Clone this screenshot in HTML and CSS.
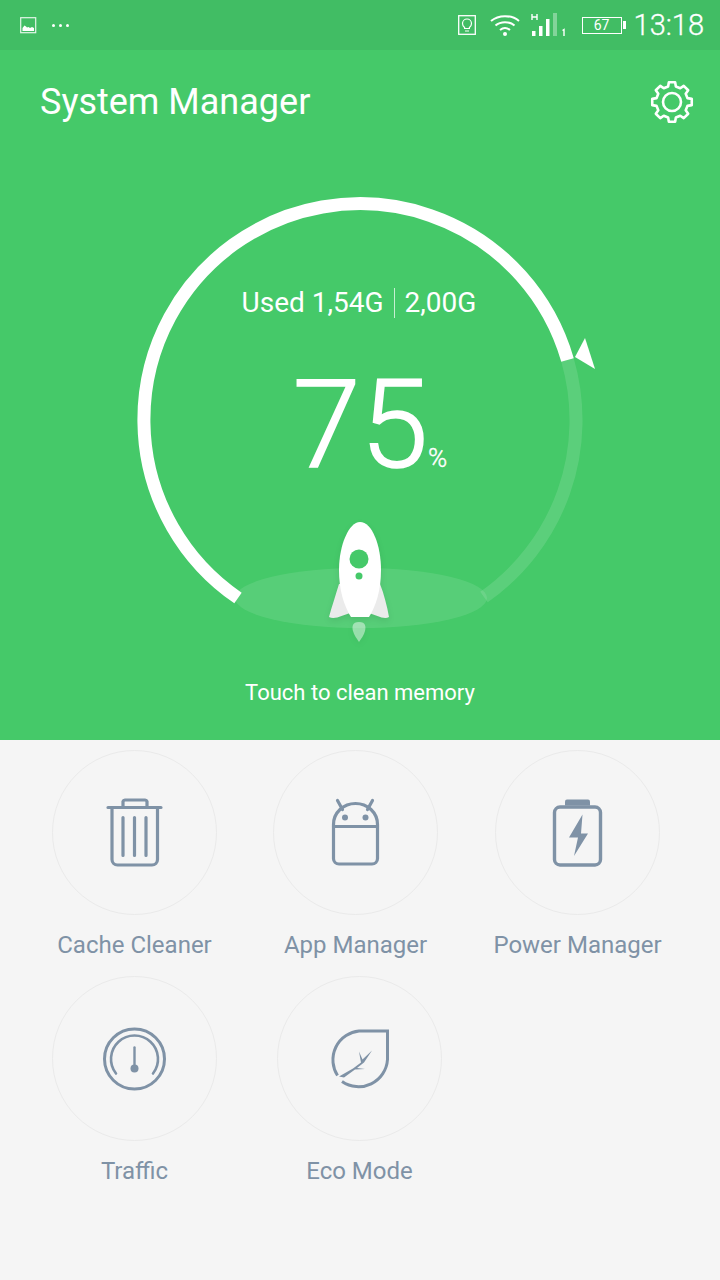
FILE: index.html
```html
<!DOCTYPE html>
<html lang="en">
<head>
<meta charset="utf-8">
<title>System Manager</title>
<link rel="stylesheet" href="styles.css">
</head>
<body>
<div class="app">
  <section class="hero">
    <div class="statusbar">
      <div class="status-left">
        <svg class="ic-img" width="17" height="17" viewBox="0 0 17 17"><rect x=".7" y=".7" width="15" height="15" fill="none" stroke="#fff" stroke-opacity=".85" stroke-width="1.2"/><path d="M2.5 14V11L4.5 8.5 6 9.5 7 10.500 8.500 10 10 11 12 10 14 11V14Z" fill="#fff"/></svg>
        <div class="dots"><i></i><i></i><i></i></div>
      </div>
      <div class="status-right">
        <svg class="ic-bulb" width="18" height="20" viewBox="0 0 18 20"><rect x=".7" y=".7" width="16.600" height="18.600" fill="none" stroke="#fff" stroke-width="1.300"/><path d="M6.600 12.500C5.300 11.500 4.500 10.200 4.500 8.500A4.500 4.500 0 0 1 13.500 8.500C13.500 10.200 12.700 11.500 11.400 12.500V13.500H6.600ZM7 16H11" fill="none" stroke="#fff" stroke-width="1.200"/></svg>
        <svg class="ic-wifi" width="30" height="22" viewBox="0 0 30 22"><path d="M1 7C8.500 .5 21.500 .5 29 7M5.500 11.500C10.500 7 19.500 7 24.500 11.500M10 16C13 13.500 17 13.500 20 16" fill="none" stroke="#fff" stroke-width="2"/><circle cx="15" cy="20" r="2" fill="#fff"/></svg>
        <svg class="ic-signal" width="37" height="24" viewBox="0 0 37 24"><rect x="1" y="18" width="3.500" height="5" fill="#fff"/><rect x="8" y="13" width="3.500" height="10" fill="#fff"/><rect x="15" y="6" width="3.500" height="17" fill="#fff"/><rect x="22" y="0" width="4" height="23" fill="#fff" fill-opacity=".35"/><path d="M1 1V7M6 1V7M1 4H6M31.500 17.500L33 16.500V23" fill="none" stroke="#fff" stroke-width="1.400"/></svg>
        <div class="battery"><span class="battery-level">67</span></div>
        <span class="time">13:18</span>
      </div>
    </div>
    <header class="titlebar">
      <h1 class="title">System Manager</h1>
      <svg class="ic-gear" width="46" height="46" viewBox="-23 -23 46 46"><path d="M15.520 -3.870L19.750 -3.130L19.750 3.130L15.520 3.870L13.710 8.240L16.180 11.750L11.750 16.180L8.240 13.710L3.870 15.520L3.130 19.750L-3.130 19.750L-3.870 15.520L-8.240 13.710L-11.750 16.180L-16.180 11.750L-13.710 8.240L-15.520 3.870L-19.750 3.130L-19.750 -3.130L-15.520 -3.870L-13.710 -8.240L-16.180 -11.750L-11.750 -16.180L-8.240 -13.710L-3.870 -15.520L-3.130 -19.750L3.130 -19.750L3.870 -15.520L8.240 -13.710L11.750 -16.180L16.180 -11.750L13.710 -8.240Z" fill="none" stroke="#fff" stroke-width="2.600" stroke-linejoin="round"/><circle r="9" fill="none" stroke="#fff" stroke-width="2.600"/></svg>
    </header>
    <div class="gauge">
      <svg class="gauge-art" width="720" height="510" viewBox="0 154 720 510">
        <path d="M567.500 360A216 216 0 0 1 484 597" fill="none" stroke="#fff" stroke-opacity=".12" stroke-width="13"/>
        <path d="M238 598A216 216 0 1 1 567.500 360" fill="none" stroke="#fff" stroke-width="13"/>
        <polygon points="585,338 595,369 575,357" fill="#fff"/>
        <ellipse cx="361" cy="598" rx="126" ry="30" fill="#fff" fill-opacity=".1"/>
        <g class="rocket">
          <path d="M359 622C352 622 352 627 353 631C354 635 357 639 359 642C361 639 364 635 365 631C366 627 366 622 359 622Z" fill="#fff" fill-opacity=".45"/>
          <path d="M339 584C336 594 332 606 329 617C335 620 343 615 350 613H369C376 615 384 620 389 617C387 606 384 594 380 584Z" fill="#ebebeb"/>
          <path d="M360 522C349 522 339 545 339 570C339 590 344 606 351 617H369C376 606 381 590 381 570C381 545 372 522 360 522Z" fill="#fff"/>
          <circle cx="359" cy="559" r="9.500" fill="#45c969"/>
          <circle cx="359" cy="576" r="3.500" fill="#45c969"/>
        </g>
      </svg>
      <div class="usage">
        <span>Used 1,54G</span>
        <span class="usage-sep"></span>
        <span>2,00G</span>
      </div>
      <div class="percent"><span class="percent-value">75</span><span class="percent-unit">%</span></div>
    </div>
    <p class="hint">Touch to clean memory</p>
  </section>
  <main class="tools">
    <div class="tool-row row-first">
      <div class="tool">
        <div class="tool-circle">
          <svg width="90" height="90" viewBox="0 2.500 90 90" fill="none" stroke="#7f92a6" stroke-width="3.200" stroke-linecap="round" stroke-linejoin="round"><path d="M18 22H71M33 22V16A2 2 0 0 1 35 14.500H55A2 2 0 0 1 57 16V22"/><path d="M22 22V74A5.500 5.500 0 0 0 27.500 79.500H62A5.500 5.500 0 0 0 67.500 74V22"/><path d="M33 32V70M44.500 32V70M56 32V70"/></svg>
        </div>
        <span class="tool-label">Cache Cleaner</span>
      </div>
      <div class="tool">
        <div class="tool-circle">
          <svg width="90" height="90" viewBox="1.500 2.500 90 90" fill="none" stroke="#7f92a6" stroke-width="3.200" stroke-linecap="round" stroke-linejoin="round"><path d="M28 15L33 24M63 15L58 24"/><path d="M24 41V39C24 27 34 18 46 18C58 18 68 27 68 39V41Z"/><path d="M24 41V73A5.500 5.500 0 0 0 29.500 78.500H62.500A5.500 5.500 0 0 0 68 73V41"/><circle cx="35.500" cy="32" r="3" fill="#7f92a6" stroke="none"/><circle cx="56" cy="32" r="3" fill="#7f92a6" stroke="none"/></svg>
        </div>
        <span class="tool-label">App Manager</span>
      </div>
      <div class="tool tool-last">
        <div class="tool-circle">
          <svg width="90" height="90" viewBox="0 2.500 90 90" fill="none"><rect x="21.500" y="21.500" width="46" height="58" rx="5.500" stroke="#7f92a6" stroke-width="3.400"/><path d="M32 20V16A2 2 0 0 1 34 14H55A2 2 0 0 1 57 16V20Z" fill="#7f92a6"/><path d="M49.500 29L36 52H45L41 70.500L55 48H48Z" fill="#7f92a6"/></svg>
        </div>
        <span class="tool-label">Power Manager</span>
      </div>
    </div>
    <div class="tool-row row-second">
      <div class="tool">
        <div class="tool-circle">
          <svg width="90" height="90" viewBox="0 -1.500 90 90" fill="none" stroke="#7f92a6" stroke-linecap="round"><circle cx="44.500" cy="43.500" r="30" stroke-width="3"/><path d="M26 58A23.500 23.500 0 1 1 63 58" stroke-width="2.600"/><path d="M44.500 32V50" stroke-width="2.400"/><circle cx="44.500" cy="53" r="4" fill="#7f92a6" stroke="none"/></svg>
        </div>
        <span class="tool-label">Traffic</span>
      </div>
      <div class="tool">
        <div class="tool-circle">
          <svg width="90" height="90" viewBox="0 -1.500 90 90" fill="none"><path d="M22.500 60A29 29 0 0 1 44 15.500H72.500V44A29 29 0 0 1 27 66" stroke="#7f92a6" stroke-width="3"/><path d="M24 61L38 53L46 47L44 36L47.500 44L57 35L49 47L42 52.500L50 53.500L40 54L29 62Z" fill="#7f92a6"/></svg>
        </div>
        <span class="tool-label">Eco Mode</span>
      </div>
    </div>
  </main>
</div>
</body>
</html>
```

FILE: styles.css
```css
* { box-sizing: border-box; }
html, body { margin: 0; padding: 0; }
body { font-family: Roboto, "Liberation Sans", sans-serif; background: #f5f5f5; }
.app { width: 720px; height: 1280px; overflow: hidden; display: flex; flex-direction: column; }
.hero { height: 740px; background: #45c969; color: #fff; display: flex; flex-direction: column; }
.statusbar { height: 50px; background: #41bd64; display: flex; align-items: center; justify-content: space-between; padding: 0 16px 0 20px; }
.status-left { display: flex; align-items: center; gap: 15px; }
.dots { display: flex; gap: 4px; }
.dots i { display: block; width: 3px; height: 3px; border-radius: 50%; background: #fff; }
.status-right { display: flex; align-items: center; }
.ic-wifi { margin-left: 14px; }
.ic-signal { margin-left: 11px; }
.battery { position: relative; width: 40px; height: 17px; margin-left: 14px; border: 1.5px solid #fff; display: flex; align-items: center; justify-content: center; }
.battery::after { content: ""; position: absolute; right: -5px; top: 3px; width: 3px; height: 8px; background: #fff; }
.battery-level { font-size: 14px; font-weight: 400; }
.time { margin-left: 12px; font-size: 29px; font-weight: 300; line-height: 50px; -webkit-text-stroke: .3px #fff; }
.titlebar { height: 104px; display: flex; align-items: center; justify-content: space-between; padding: 0 25px 0 40px; }
.title { margin: 0; font-size: 36px; font-weight: 400; }
.gauge { position: relative; height: 510px; display: flex; flex-direction: column; align-items: center; }
.gauge-art { position: absolute; left: 0; top: 0; }
.rocket { filter: drop-shadow(0 3px 3px rgba(0,0,0,.08)); }
.usage { position: relative; margin-top: 133px; margin-left: -2px; display: flex; align-items: center; font-size: 28px; line-height: 32px; }
.usage-sep { width: 1px; height: 30px; margin: 0 10px; background: rgba(255,255,255,.7); }
.percent { position: relative; margin-top: 46px; margin-left: 20px; display: flex; align-items: baseline; font-weight: 300; }
.percent-value { font-size: 122px; line-height: 122px; -webkit-text-stroke: 1.6px #fff; }
.percent-unit { font-size: 26px; -webkit-text-stroke: .4px #fff; }
.hint { margin: 15px 0 0; text-align: center; font-size: 22px; line-height: 28px; }
.tools { flex: 1; padding-top: 10px; }
.tool-row { display: flex; padding-left: 52px; height: 226px; }
.row-first { gap: 56px; }
.row-second { gap: 60px; }
.tool-last { margin-left: 1px; }
.tool { width: 165px; display: flex; flex-direction: column; align-items: center; }
.tool-circle { width: 165px; height: 165px; flex: none; border: 1px solid #eaeaea; border-radius: 50%; display: flex; align-items: center; justify-content: center; }
.tool-label { margin-top: 16px; font-size: 24px; line-height: 28px; color: #7f92a6; white-space: nowrap; }
```
